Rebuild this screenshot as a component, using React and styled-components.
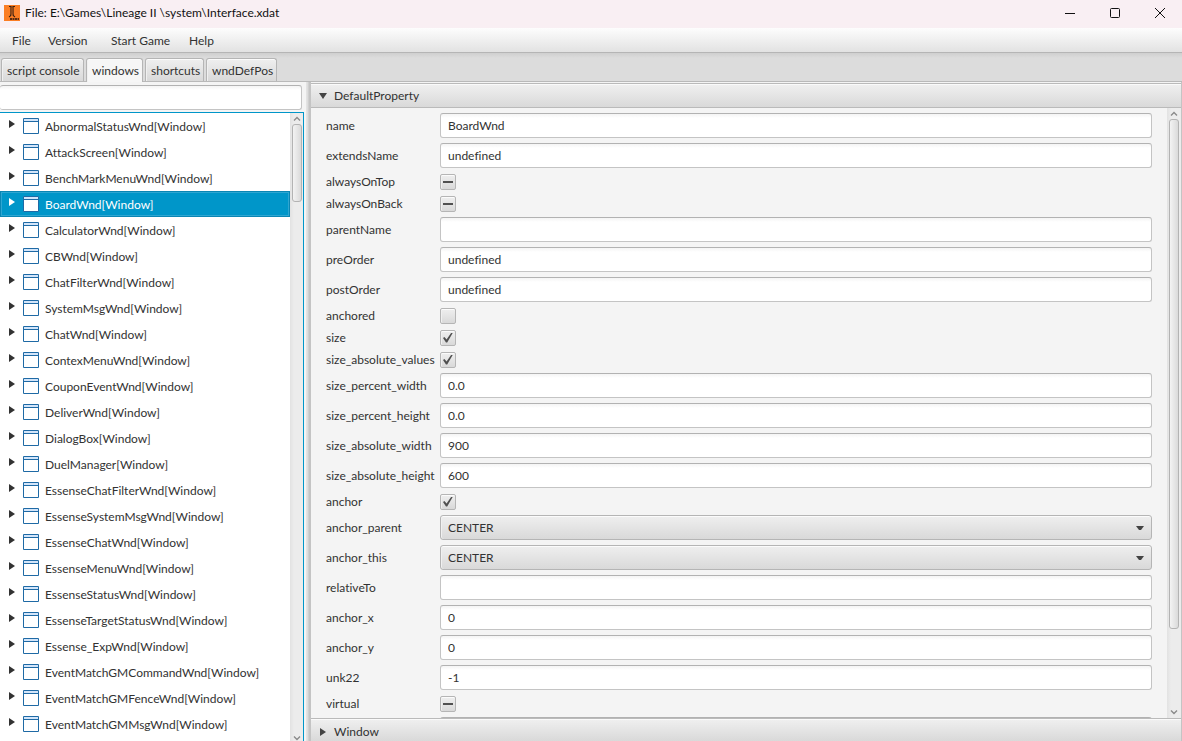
import React, { useState } from "react";
import styled, { createGlobalStyle, css } from "styled-components";

const GlobalStyle = createGlobalStyle`
  *, *::before, *::after { box-sizing: border-box; }
  body { margin: 0; overflow: hidden; }
  body, button, input, select {
    font-family: Lato, "Open Sans", sans-serif;
    font-size: 12px;
    font-variant-ligatures: none;
    line-height: 16px;
    color: #323232;
  }
  button { margin: 0; padding: 0; border: 0; background: none; text-align: left; white-space: nowrap; }
`;

const raised = css`
  border: 1px solid #b5b5b5;
  border-radius: 3px;
  background: linear-gradient(#efefef, #d9d9d9);
  box-shadow: inset 0 1px 0 #fbfbfb, inset 1px 0 0 #f0f0f0;
`;

const Frame = styled.div`
  display: flex;
  flex-direction: column;
  height: 100vh;
  background: #f4f4f4;
`;

const TitleBar = styled.header`
  display: flex;
  align-items: center;
  flex: none;
  height: 28px;
  padding: 0 0 3px 4px;
  gap: 5px;
  background: #f9eff3;
`;

const Title = styled.h1`
  flex: 1;
  margin: 0;
  font-size: 12px;
  font-weight: 400;
  line-height: 16px;
  color: #111;
`;

const WindowControls = styled.div`
  display: flex;
`;

const WindowControl = styled.button`
  display: grid;
  place-items: center;
  width: 45px;
  height: 24px;
`;

const MenuBar = styled.nav`
  display: flex;
  flex: none;
  height: 25px;
  padding-left: 3px;
  border-bottom: 1px solid #b5b5b5;
  background: linear-gradient(#fdfdfd, #e2e2e2);
`;

const MenuItem = styled.button`
  width: ${(p) => p.$width}px;
  padding: 2px 9px 0;
`;

const TabStrip = styled.div`
  display: flex;
  align-items: flex-end;
  flex: none;
  gap: 2px;
  height: 29px;
  padding: 0 1px;
  border-bottom: 1px solid #b9b9b9;
  background: linear-gradient(#cfcfcf, #dcdcdc 5px, #dcdcdc);
`;

const Tab = styled.button`
  width: ${(p) => p.$width}px;
  height: 23px;
  padding: 2px 5px 0;
  ${raised}
  border-bottom: 0;
  border-radius: 3px 3px 0 0;
  ${(p) =>
    p.$active &&
    css`
      height: 24px;
      margin-bottom: -1px;
      padding-bottom: 1px;
      background: #f6f6f6;
    `}
`;

const Split = styled.main`
  display: flex;
  flex: 1;
  min-height: 0;
`;

const Sidebar = styled.section`
  display: flex;
  flex-direction: column;
  flex: none;
  width: 304px;
  padding-top: 3px;
`;

const field = css`
  height: 25px;
  border: 1px solid #c4c4c4;
  border-top-color: #b2b2b2;
  border-radius: 3px;
  background: linear-gradient(#f4f4f4, #fff 4px);
  outline: 0;
`;

const Search = styled.input`
  ${field}
  flex: none;
  width: 302px;
  margin-bottom: 2px;
  border-left: 0;
  padding: 0 7px;
`;

const TreeView = styled.div`
  display: flex;
  flex: 1;
  min-height: 0;
  border: solid #0096c9;
  border-width: 1px 1px 0 0;
  background: #fff;
`;

const TreeList = styled.ul`
  flex: 1;
  min-width: 0;
  margin: 0;
  padding: 0;
  list-style: none;
  overflow: hidden;
`;

const TreeRow = styled.button`
  display: flex;
  align-items: center;
  width: 100%;
  height: 26px;
  padding: 0 9px;
  color: ${(p) => (p.$selected ? "#fff" : "#323232")};
  background: ${(p) => (p.$selected ? "#0096c9" : "#fff")};
  box-shadow: ${(p) => (p.$selected ? "inset 0 0 0 1px #0a86b4, inset 0 0 0 2px #2ea6d2" : "none")};
`;

const Disclosure = styled.svg`
  flex: none;
  width: 6px;
  height: 8px;
  margin: 0 8px 4px 0;
`;

const RowIcon = styled.svg`
  flex: none;
  width: 16px;
  height: 16px;
  margin-right: 6px;
`;

const RowText = styled.span`
  padding-top: 1px;
`;

const ScrollTrack = styled.div`
  display: flex;
  flex-direction: column;
  align-items: center;
  flex: none;
  width: ${(p) => p.$width}px;
  padding-bottom: ${(p) => p.$end}px;
  background: linear-gradient(90deg, #e2e2e2, #ececec 4px, #ececec);
`;

const ScrollArrow = styled.svg`
  flex: none;
  width: 8px;
  height: 5px;
`;

const Thumb = styled.div`
  width: 10px;
  flex: 0 1 ${(p) => p.$share};
  margin: 3px 0 auto;
  border: 1px solid #b3b3b3;
  border-radius: 3px;
  background: linear-gradient(90deg, #f3f3f3, #dadada);
`;

const ScrollStart = styled(ScrollArrow)`
  margin-top: 3px;
`;

const Divider = styled.div`
  flex: none;
  width: 7px;
  background: linear-gradient(90deg, #f4f4f4 2px, #e6e6e6 2px, #dadada 4px, #c4c4c4 5px, #c4c4c4);
`;

const Inspector = styled.section`
  display: flex;
  flex-direction: column;
  flex: 1;
  min-width: 0;
  padding-top: 1px;
  border-right: 1px solid #c4c4c4;
`;

const PaneHeader = styled.button`
  display: flex;
  align-items: center;
  flex: none;
  width: 100%;
  height: ${(p) => (p.$last ? 23 : 25)}px;
  padding: ${(p) => (p.$last ? 3 : 0)}px 8px 0;
  gap: 7px;
  border: solid #bababa;
  border-width: ${(p) => (p.$last ? "1px 0 0" : "1px 0")};
  background: linear-gradient(#f0f0f0, #d9d9d9);
  box-shadow: inset 0 1px 0 #fafafa;
`;

const PaneBody = styled.div`
  display: flex;
  flex: 1;
  min-height: 0;
`;

const Form = styled.form`
  display: flex;
  flex-direction: column;
  flex: 1;
  min-width: 0;
  gap: 5px;
  padding: 5px 15px 0;
  overflow: hidden;
`;

const FormRow = styled.div`
  display: flex;
  align-items: center;
  flex: none;
  height: ${(p) => (p.$short ? 17 : 25)}px;
`;

const Label = styled.label`
  flex: none;
  width: 114px;
  white-space: nowrap;
`;

const TextField = styled.input`
  ${field}
  flex: 1;
  min-width: 0;
  padding: 0 7px;
`;

const NextField = styled(TextField)`
  margin-left: 114px;
`;

const Select = styled.select`
  ${raised}
  flex: 1;
  min-width: 0;
  height: 25px;
  padding: 0 7px;
  appearance: none;
  background: url("data:image/svg+xml,%3Csvg xmlns='http://www.w3.org/2000/svg' width='8' height='4'%3E%3Cpath d='M0 0h8L5 4H3z' fill='%23444'/%3E%3C/svg%3E") no-repeat right 7px center,
    linear-gradient(#efefef, #d9d9d9);
`;

const Check = styled.input`
  ${raised}
  flex: none;
  width: 16px;
  height: 16px;
  margin: 0;
  border-radius: 2px;
  appearance: none;
  display: grid;
  place-items: center;
  &:indeterminate::before {
    content: "";
    width: 10px;
    height: 2px;
    background: #505050;
  }
  &:checked::before {
    content: "";
    width: 10px;
    height: 10px;
    background: #505050;
    clip-path: polygon(0 56%, 14% 46%, 36% 70%, 84% 0, 100% 0, 42% 100%, 30% 100%);
  }
`;

const windows = [
  "AbnormalStatusWnd", "AttackScreen", "BenchMarkMenuWnd", "BoardWnd", "CalculatorWnd", "CBWnd",
  "ChatFilterWnd", "SystemMsgWnd", "ChatWnd", "ContexMenuWnd", "CouponEventWnd", "DeliverWnd",
  "DialogBox", "DuelManager", "EssenseChatFilterWnd", "EssenseSystemMsgWnd", "EssenseChatWnd",
  "EssenseMenuWnd", "EssenseStatusWnd", "EssenseTargetStatusWnd", "Essense_ExpWnd",
  "EventMatchGMCommandWnd", "EventMatchGMFenceWnd", "EventMatchGMMsgWnd",
];

const properties = [
  ["name", "text", "BoardWnd"],
  ["extendsName", "text", "undefined"],
  ["alwaysOnTop", "check", null],
  ["alwaysOnBack", "check", null],
  ["parentName", "text", ""],
  ["preOrder", "text", "undefined"],
  ["postOrder", "text", "undefined"],
  ["anchored", "check", false],
  ["size", "check", true],
  ["size_absolute_values", "check", true],
  ["size_percent_width", "text", "0.0"],
  ["size_percent_height", "text", "0.0"],
  ["size_absolute_width", "text", "900"],
  ["size_absolute_height", "text", "600"],
  ["anchor", "check", true],
  ["anchor_parent", "select", "CENTER"],
  ["anchor_this", "select", "CENTER"],
  ["relativeTo", "text", ""],
  ["anchor_x", "text", "0"],
  ["anchor_y", "text", "0"],
  ["unk22", "text", "-1"],
  ["virtual", "check", null],
];

function PropertyRow({ name, kind, value }) {
  const id = `property-${name}`;
  return (
    <FormRow $short={kind === "check"}>
      <Label htmlFor={id}>{name}</Label>
      {kind === "text" && <TextField id={id} defaultValue={value} />}
      {kind === "select" && (
        <Select id={id} defaultValue={value}>
          <option>{value}</option>
        </Select>
      )}
      {kind === "check" && (
        <Check
          id={id}
          type="checkbox"
          defaultChecked={value === true}
          ref={(el) => {
            if (el && value === null) el.indeterminate = true;
          }}
        />
      )}
    </FormRow>
  );
}

function Scrollbar({ width, share, end }) {
  return (
    <ScrollTrack $width={width} $end={end} aria-hidden="true">
      <ScrollStart viewBox="0 0 8 5"><path d="M1 4.500 4 1.500l3 3" fill="none" stroke="#8a8a8a" strokeWidth="1.4" /></ScrollStart>
      <Thumb $share={share} />
      <ScrollArrow viewBox="0 0 8 5"><path d="M1 .5l3 3 3-3" fill="none" stroke="#8a8a8a" strokeWidth="1.4" /></ScrollArrow>
    </ScrollTrack>
  );
}

export default function App() {
  const [selected, setSelected] = useState("BoardWnd");
  return (
    <Frame>
      <GlobalStyle />
      <TitleBar>
        <svg width="16" height="16" viewBox="0 0 16 16" aria-hidden="true">
          <path fill="#fb7d24" d="M0 0h16v16H0z" />
          <path d="M5 1.500h2v2M11 1.500H9v2M7 3v6q0 2-2 3M9 3v6q0 2 2 3" fill="none" stroke="#3a2012" strokeWidth="1.2" />
          <path d="M8 3v8" stroke="#a3521f" />
          <path d="M6 14h9" stroke="#5c2c10" strokeWidth="2" strokeDasharray="2 .5" />
        </svg>
        <Title>File: E:\Games\Lineage II \system\Interface.xdat</Title>
        <WindowControls>
          <WindowControl aria-label="Minimize">
            <svg width="10" height="10"><path d="M0 5.500h10" stroke="#111" /></svg>
          </WindowControl>
          <WindowControl aria-label="Maximize">
            <svg width="10" height="10"><rect x=".5" y=".5" width="9" height="9" rx="1" fill="none" stroke="#111" /></svg>
          </WindowControl>
          <WindowControl aria-label="Close">
            <svg width="10" height="10"><path d="m0 0 10 10M10 0 0 10" stroke="#111" /></svg>
          </WindowControl>
        </WindowControls>
      </TitleBar>
      <MenuBar>
        <MenuItem $width={36}>File</MenuItem>
        <MenuItem $width={63}>Version</MenuItem>
        <MenuItem $width={78}>Start Game</MenuItem>
        <MenuItem $width={44}>Help</MenuItem>
      </MenuBar>
      <TabStrip role="tablist">
        <Tab role="tab" $width={83}>script console</Tab>
        <Tab role="tab" $width={57} $active aria-selected="true">windows</Tab>
        <Tab role="tab" $width={59}>shortcuts</Tab>
        <Tab role="tab" $width={71}>wndDefPos</Tab>
      </TabStrip>
      <Split>
        <Sidebar>
          <Search aria-label="Filter windows" />
          <TreeView>
            <TreeList>
              {windows.map((name) => {
                const on = name === selected;
                return (
                  <li key={name}>
                    <TreeRow $selected={on} onClick={() => setSelected(name)}>
                      <Disclosure viewBox="0 0 6 8" aria-hidden="true"><path d="M0 0l6 4-6 4z" fill={on ? "#fff" : "#323232"} /></Disclosure>
                      <RowIcon viewBox="0 0 16 16" aria-hidden="true">
                        <path d="M.5.5h15v15H.5z" fill="#fff" stroke="#1f6aa5" />
                        <path d="M1 1h14v2H1z" fill="#d3e5fa" />
                        <path d="M1 3.500h14" stroke="#1f6aa5" />
                      </RowIcon>
                      <RowText>{name}[Window]</RowText>
                    </TreeRow>
                  </li>
                );
              })}
            </TreeList>
            <Scrollbar width={13} share="78px" end={0} />
          </TreeView>
        </Sidebar>
        <Divider />
        <Inspector>
          <PaneHeader aria-expanded="true">
            <svg width="8" height="6" aria-hidden="true"><path d="M0 0h8L4 6z" fill="#444" /></svg>
            DefaultProperty
          </PaneHeader>
          <PaneBody>
            <Form>
              {properties.map(([name, kind, value]) => (
                <PropertyRow key={name} name={name} kind={kind} value={value} />
              ))}
              <FormRow>
                <NextField aria-label="Next property" />
              </FormRow>
            </Form>
            <Scrollbar width={14} share="84%" end={3} />
          </PaneBody>
          <PaneHeader $last aria-expanded="false">
            <svg width="8" height="8" aria-hidden="true"><path d="M1 0l6 4-6 4z" fill="#444" /></svg>
            Window
          </PaneHeader>
        </Inspector>
      </Split>
    </Frame>
  );
}
